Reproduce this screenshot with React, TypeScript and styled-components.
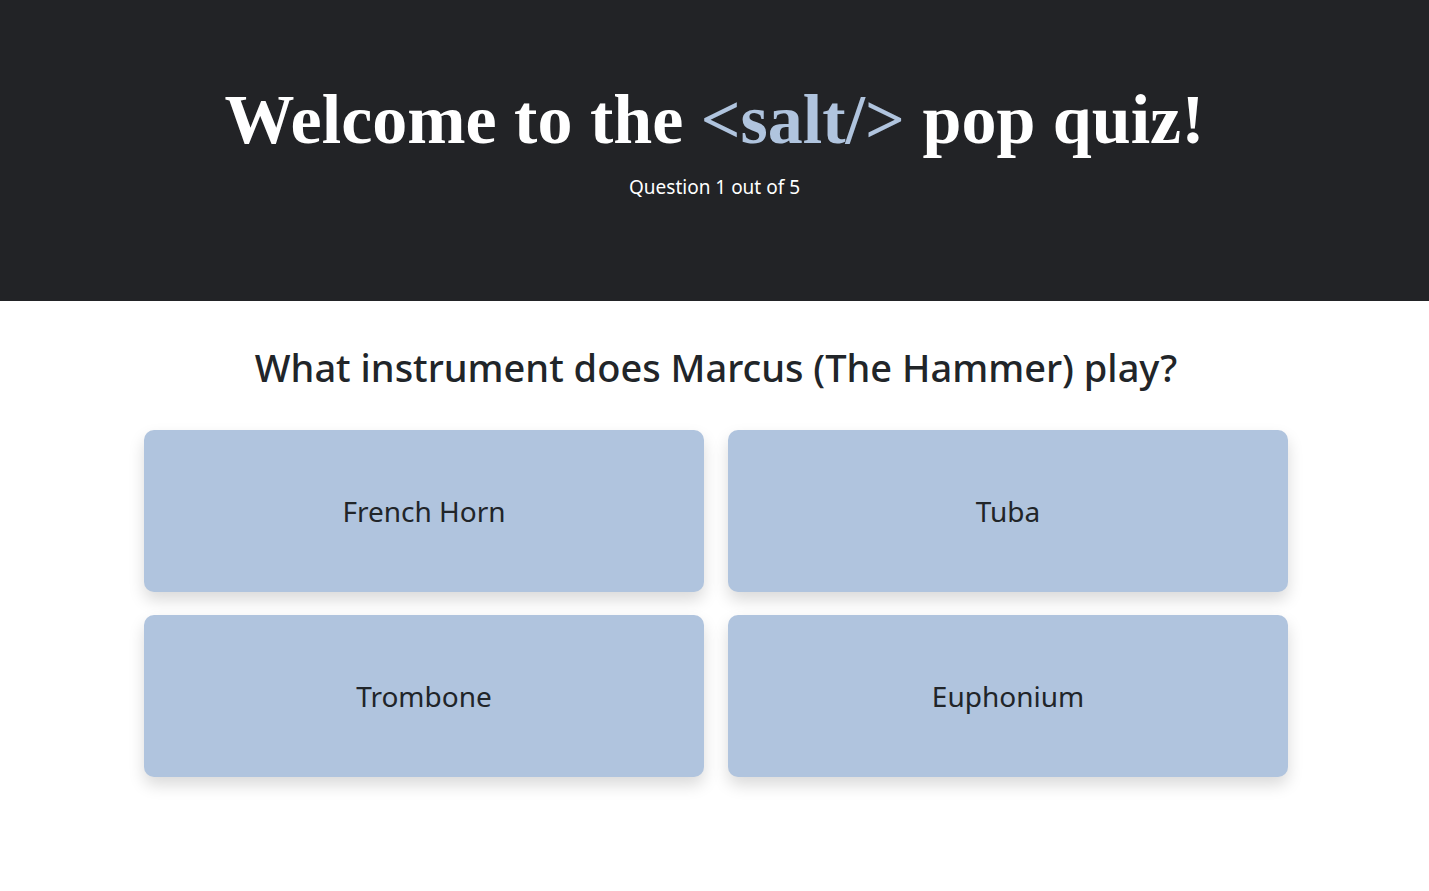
import React from "react";
import styled, { createGlobalStyle } from "styled-components";

const GlobalStyle = createGlobalStyle`
  html, body { margin: 0; padding: 0; background: #ffffff; }
  body { font-family: "Noto Sans", "Open Sans", sans-serif; color: #212529; }
  * { box-sizing: border-box; }
`;

const Header = styled.header`
  background: #222326;
  height: 301px;
  display: flex;
  flex-direction: column;
  align-items: center;
  padding-top: 78px;
`;

const Title = styled.h1`
  margin: 0;
  font-family: "Liberation Serif", "Times New Roman", serif;
  font-weight: 700;
  font-size: 70px;
  line-height: 84px;
  color: #ffffff;
`;

const Accent = styled.span`
  color: #b0c4de;
`;

const Subtitle = styled.p`
  margin: 13px 0 0;
  font-size: 19px;
  line-height: 24px;
  color: #ffffff;
`;

const Main = styled.main`
  width: 1147px;
  margin: 0 auto;
  padding: 41px 0 60px 3px;
  display: flex;
  flex-direction: column;
  align-items: center;
`;

const Question = styled.h2`
  margin: 0 0 38px;
  font-size: 38px;
  line-height: 50px;
  font-weight: 500;
  color: #212529;
`;

const Grid = styled.div`
  width: 100%;
  display: grid;
  grid-template-columns: 1fr 1fr;
  gap: 23px 24px;
`;

const Answer = styled.button`
  height: 162px;
  border: none;
  border-radius: 10px;
  background: #b0c4de;
  box-shadow: 0 8px 16px rgba(0, 0, 0, 0.15);
  font-family: inherit;
  font-size: 28px;
  color: #212529;
  display: flex;
  align-items: center;
  justify-content: center;
  cursor: pointer;
`;

const answers = ["French Horn", "Tuba", "Trombone", "Euphonium"];

export default function App() {
  return (
    <>
      <GlobalStyle />
      <Header>
        <Title>
          Welcome to the <Accent>&lt;salt/&gt;</Accent> pop quiz!
        </Title>
        <Subtitle>Question 1 out of 5</Subtitle>
      </Header>
      <Main>
        <Question>What instrument does Marcus (The Hammer) play?</Question>
        <Grid>
          {answers.map((a) => (
            <Answer key={a}>{a}</Answer>
          ))}
        </Grid>
      </Main>
    </>
  );
}
